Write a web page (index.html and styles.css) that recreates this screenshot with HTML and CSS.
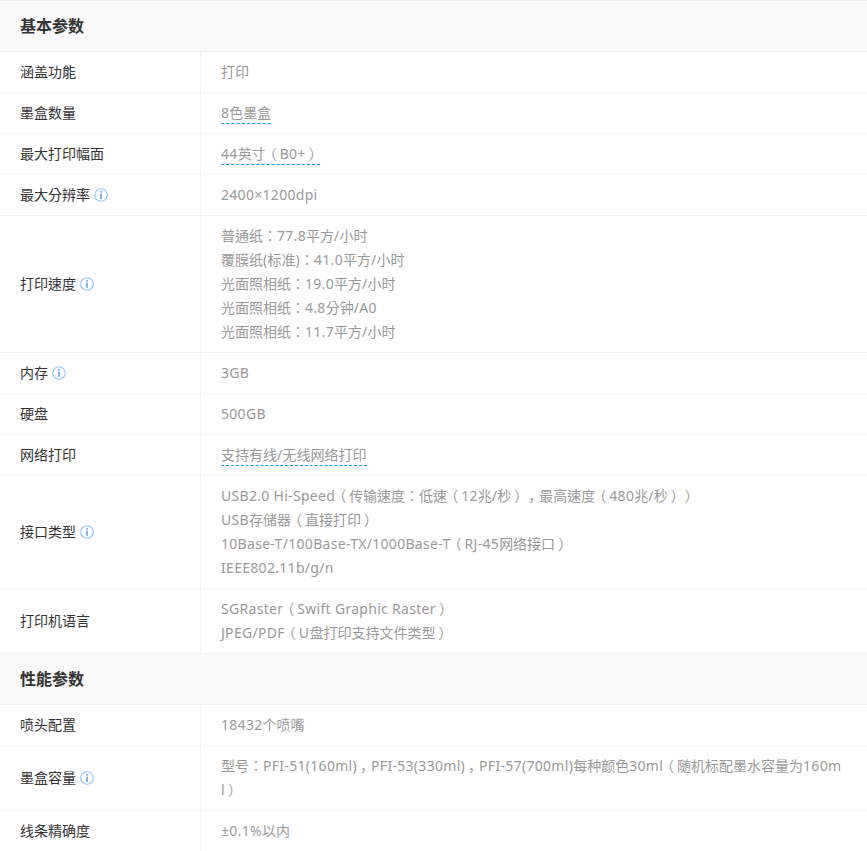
FILE: index.html
```html
<!DOCTYPE html>
<html lang="zh">
<head>
<meta charset="utf-8">
<title>基本参数</title>
<link rel="stylesheet" href="styles.css">
</head>
<body>
<svg class="defs" width="0" height="0" aria-hidden="true">
  <symbol id="info" viewBox="0 0 14 14">
    <circle cx="7" cy="7" r="6.3" fill="none" stroke="#8cc4fb" stroke-width="1.1"/>
    <rect x="6.2" y="3" width="1.6" height="1.6" fill="#4ea5f8"/>
    <rect x="6.2" y="5.7" width="1.6" height="5.2" fill="#4ea5f8"/>
  </symbol>
</svg>
<table class="specs">
  <colgroup><col class="col-name"><col class="col-value"></colgroup>
  <tbody>
    <tr class="section"><th colspan="2">基本参数</th></tr>
    <tr><td class="name">涵盖功能</td><td class="value">打印</td></tr>
    <tr><td class="name">墨盒数量</td><td class="value"><span class="link"><span class="en">8</span>色墨盒</span></td></tr>
    <tr><td class="name">最大打印幅面</td><td class="value"><span class="link"><span class="en">44</span>英寸<span class="po">（</span><span class="en">B0+</span><span class="pc">）</span></span></td></tr>
    <tr><td class="name">最大分辨率<svg class="info"><use href="#info"/></svg></td><td class="value"><span class="en">2400×1200dpi</span></td></tr>
    <tr><td class="name">打印速度<svg class="info"><use href="#info"/></svg></td><td class="value">普通纸：<span class="en">77.8</span>平方<span class="en">/</span>小时<br>覆膜纸<span class="en">(</span>标准<span class="en">)</span>：<span class="en">41.0</span>平方<span class="en">/</span>小时<br>光面照相纸：<span class="en">19.0</span>平方<span class="en">/</span>小时<br>光面照相纸：<span class="en">4.8</span>分钟<span class="en">/A0</span><br>光面照相纸：<span class="en">11.7</span>平方<span class="en">/</span>小时</td></tr>
    <tr><td class="name">内存<svg class="info"><use href="#info"/></svg></td><td class="value"><span class="en">3GB</span></td></tr>
    <tr><td class="name">硬盘</td><td class="value"><span class="en">500GB</span></td></tr>
    <tr><td class="name">网络打印</td><td class="value"><span class="link">支持有线<span class="en">/</span>无线网络打印</span></td></tr>
    <tr><td class="name">接口类型<svg class="info"><use href="#info"/></svg></td><td class="value"><span class="en">USB2.0 Hi-Speed</span><span class="po">（</span>传输速度：低速<span class="po">（</span><span class="en">12</span>兆<span class="en">/</span>秒<span class="pc">）</span><span class="cm">，</span>最高速度<span class="po">（</span><span class="en">480</span>兆<span class="en">/</span>秒<span class="pc">）</span><span class="pc">）</span><br><span class="en">USB</span>存储器<span class="po">（</span>直接打印<span class="pc">）</span><br><span class="en">10Base-T/100Base-TX/1000Base-T</span><span class="po">（</span><span class="en">RJ-45</span>网络接口<span class="pc">）</span><br><span class="en">IEEE802.11b/g/n</span></td></tr>
    <tr><td class="name">打印机语言</td><td class="value"><span class="en">SGRaster</span><span class="po">（</span><span class="en">Swift Graphic Raster</span><span class="pc">）</span><br><span class="en">JPEG/PDF</span><span class="po">（</span><span class="en">U</span>盘打印支持文件类型<span class="pc">）</span></td></tr>
    <tr class="section"><th colspan="2">性能参数</th></tr>
    <tr><td class="name">喷头配置</td><td class="value"><span class="en">18432</span>个喷嘴</td></tr>
    <tr><td class="name">墨盒容量<svg class="info"><use href="#info"/></svg></td><td class="value">型号：<span class="en">PFI-51(160ml)</span><span class="cm">，</span><span class="en">PFI-53(330ml)</span><span class="cm">，</span><span class="en">PFI-57(700ml)</span>每种颜色<span class="en">30ml</span><span class="po">（</span>随机标配墨水容量为<span class="en">160ml</span><span class="pc">）</span></td></tr>
    <tr><td class="name">线条精确度</td><td class="value"><span class="en">±0.1%</span>以内</td></tr>
  </tbody>
</table>
</body>
</html>
```
FILE: styles.css
```css
html, body {
  margin: 0;
  padding: 0;
  background: #fff;
  overflow: hidden;
}
.defs {
  position: absolute;
}
.specs {
  width: 867px;
  border-collapse: separate;
  border-spacing: 0;
  table-layout: fixed;
  border-top: 1px solid #eee;
  font-family: "Noto Sans", "Noto Sans CJK TC", sans-serif;
  font-size: 14px;
  font-feature-settings: "locl" 0;
  text-spacing-trim: space-all;
}
.col-name {
  width: 201px;
}
.section th {
  height: 48px;
  padding: 0 20px 2px;
  background: #f9f9f9;
  border-bottom: 1px solid #f2f2f2;
  color: #333;
  font-size: 16px;
  font-weight: 700;
  text-align: left;
}
.name {
  padding: 8px 0 8px 20px;
  border-right: 1px solid #f2f2f2;
  border-bottom: 1px solid #f2f2f2;
  color: #333;
  line-height: 24px;
}
.value {
  padding: 8px 20px 8px 20px;
  border-bottom: 1px solid #f2f2f2;
  color: #999;
  line-height: 24px;
  word-break: break-all;
}
.en {
  letter-spacing: 0.3px;
}
/* Ideographic punctuation sits mid-cell in the reference: nudge it without changing its advance. */
.po {
  margin: 0 3px 0 -3px;
}
.pc {
  margin: 0 -3px 0 3px;
}
.cm {
  font-family: "Noto Sans CJK SC", sans-serif;
  line-height: 1;
  margin: 0 -3px 0 3px;
}
.specs tr:last-child td {
  border-bottom: 0;
}
.link {
  display: inline-block;
  line-height: 20px;
  white-space: nowrap;
  border-bottom: 1px dashed #1e90ff;
}
.info {
  width: 14px;
  height: 14px;
  margin-left: 4px;
  vertical-align: -2px;
}
```
